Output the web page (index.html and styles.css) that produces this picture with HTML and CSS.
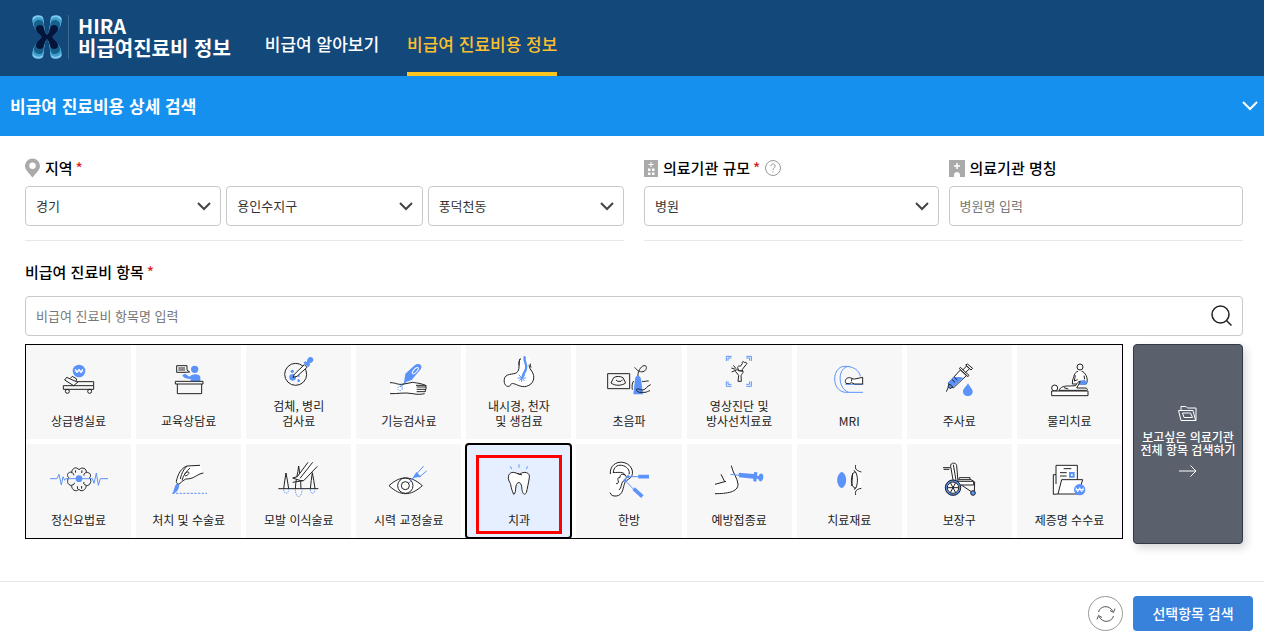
FILE: index.html
```
<!DOCTYPE html>
<html lang="ko">
<head>
<meta charset="utf-8">
<meta name="viewport" content="width=device-width, initial-scale=1">
<title>비급여 진료비용 정보</title>
<link rel="stylesheet" href="styles.css">
</head>
<body>
<header class="header">
  <a class="logo" href="#">
    <svg class="logo-mark" viewBox="98 43 90 132" aria-hidden="true">
      <defs>
        <g id="wing">
          <path fill="#7ccaf0" d="M99 56C99 42 127 40 131 50C135 62 133 88 141 100L143 109H128C122 98 99 84 99 56Z"/>
          <path fill="#3f9fcb" d="M101 64C101 48 127 46 131 57C135 68 133 90 141 101L143 109H128C122 98 101 88 101 64Z"/>
          <path fill="#15608c" d="M104 72C104 56 127 54 131 65C135 76 134 92 141 102L143 109H128C123 98 104 90 104 72Z"/>
          <path fill="#04143a" d="M110 84C109 71 128 69 132 79C135 86 136 96 143 103V109H127C124 101 111 96 110 84Z"/>
        </g>
      </defs>
      <use href="#wing"/>
      <use href="#wing" transform="translate(286 0) scale(-1 1)"/>
      <use href="#wing" transform="translate(0 218) scale(1 -1)"/>
      <use href="#wing" transform="translate(286 218) scale(-1 -1)"/>
    </svg>
    <span class="logo-text">HIRA<br>비급여진료비 정보</span>
  </a>
  <nav class="nav">
    <a href="#">비급여 알아보기</a>
    <a class="current" href="#" aria-current="page">비급여 진료비용 정보</a>
  </nav>
</header>

<main>
  <div class="titlebar">
    <h1>비급여 진료비용 상세 검색</h1>
    <button class="fold" type="button" aria-label="접기">
      <svg width="18" height="12" viewBox="0 0 18 12"><path d="M2 2l7 7 7-7" fill="none" stroke="#fff" stroke-width="2"/></svg>
    </button>
  </div>

  <form class="search">
    <div class="filters">
      <fieldset class="filter">
        <legend class="label">
          <svg width="15" height="20" viewBox="0 0 15 20"><path fill="#aaa" fill-rule="evenodd" d="M7.500 .5A7.500 7.500 0 0 0 0 8c0 4 4 7 7.500 11.500C11 15 15 12 15 8A7.500 7.500 0 0 0 7.500 .5zM7.500 4.500a3 3 0 1 1 0 6.500 3 3 0 0 1 0-6.500z"/></svg>
          지역 <em>*</em>
        </legend>
        <div class="controls tight">
          <span class="select"><select aria-label="시도"><option>경기</option></select><svg viewBox="0 0 14 9"><path d="M1 1l6 6 6-6"/></svg></span>
          <span class="select"><select aria-label="시군구"><option>용인수지구</option></select><svg viewBox="0 0 14 9"><path d="M1 1l6 6 6-6"/></svg></span>
          <span class="select"><select aria-label="읍면동"><option>풍덕천동</option></select><svg viewBox="0 0 14 9"><path d="M1 1l6 6 6-6"/></svg></span>
        </div>
      </fieldset>
      <div class="filter controls">
        <div class="field">
          <label class="label" for="size">
            <svg width="14" height="17" viewBox="0 0 14 17"><path fill="#aaa" d="M0 0h14v17H0z"/><path d="M7 2v5M4.500 4.500h5" stroke="#fff"/><path fill="#fff" d="M4 8.500h2.500v2.500H4zM8 8.500h2.500v2.500H8zM4 12.500h2.500v2.500H4zM8 12.500h2.500v2.500H8z"/></svg>
            의료기관 규모 <em>*</em>
            <svg width="16" height="16" viewBox="0 0 16 16" fill="none" stroke="#999"><circle cx="8" cy="8" r="7.500"/><path d="M5.800 6.200c0-3 4.400-3 4.400-.2 0 1.700-2.200 1.800-2.200 4M8 11.300v1.400"/></svg>
          </label>
          <span class="select"><select id="size"><option>병원</option></select><svg viewBox="0 0 14 9"><path d="M1 1l6 6 6-6"/></svg></span>
        </div>
        <div class="field">
          <label class="label" for="name">
            <svg width="16" height="17" viewBox="0 0 16 17"><path fill="#aaa" d="M0 0h16v17h-5v-2c0-4-6-4-6 0v2H0z"/><path d="M8 3v6M5 6h6" stroke="#fff" stroke-width="1.500"/></svg>
            의료기관 명칭
          </label>
          <input id="name" type="text" placeholder="병원명 입력">
        </div>
      </div>
    </div>

    <label class="label item-label" for="item">비급여 진료비 항목 <em>*</em></label>
    <div class="item-search">
      <input id="item" type="text" placeholder="비급여 진료비 항목명 입력">
      <button type="button" aria-label="검색"><svg width="22" height="22" viewBox="0 0 22 22" fill="none" stroke="#222" stroke-width="1.500"><circle cx="9.500" cy="9.500" r="8.500"/><path d="M15.500 15.500l5 5"/></svg></button>
    </div>

    <div class="picker">
      <div class="tiles">
        <button class="tile" type="button">
          <svg viewBox="84 54 180 132"><circle class="bf" cx="174" cy="93" r="19"/><path class="w" d="M163 87l5 12 6-12 6 12 5-12M161 93h26"/><path class="k" d="M127 137h91v11h-91zM218 137v-12h-52l-29-13-6 8 27 17M148 115l6-6 13 8-2 7M158 137l14-12"/><circle class="k" cx="139" cy="154" r="6"/><circle class="k" cx="206" cy="154" r="6"/></svg>
          <span>상급병실료</span></button>
        <button class="tile" type="button">
          <svg viewBox="414 54 180 132"><circle class="bf" cx="521" cy="88" r="11"/><path class="bf" d="M484 105l8-4 14 9c8-9 26-10 32 0v14h-29v-7c-10 0-22-2-25-12z"/><path class="k" d="M467 77h31v13l8 6-14 1h-25zM472 84h20M472 90h20M463 124h83v8h-83zM469 132v29h73v-29"/></svg>
          <span>교육상담료</span></button>
        <button class="tile two" type="button">
          <svg viewBox="86 33 180 132"><circle class="k" cx="166" cy="103" r="33"/><circle class="bf" cx="157" cy="112" r="10"/><circle class="bf" cx="156" cy="94" r="5"/><circle class="bf" cx="175" cy="108" r="3"/><circle class="bf" cx="175" cy="122" r="4"/><path class="k wf" d="M158 112l4-9 30-29 8 8-30 27z"/><path class="bf" d="M189 68l6-4 5 2c0-20 18-18 19-8 1 8-7 12-11 11l1 6-5 7z"/></svg>
          <span>검체, 병리<br>검사료</span></button>
        <button class="tile" type="button">
          <svg viewBox="417 54 180 132"><path class="wf" d="M452 128l34 6 32-7 42 13-6 23-36-4-66 3z"/><path class="bf" d="M492 128l4-27 28-25c12-10 26 0 18 12l-27 32-15 5-18 17-3-2z"/><ellipse cx="526" cy="92" rx="12" ry="5" class="w" transform="rotate(-48 526 92)"/><path class="k" d="M450 128c20 0 22 8 42 4l26-5c14 2 32 5 38 9M450 161c22 1 44-5 68 0 14 3 28 2 36 0M528 136h30v5h-28M530 148h28v-7M530 155h26v-7"/><circle class="b" cx="480" cy="145" r="7" stroke-dasharray="4 3"/></svg>
          <span>기능검사료</span></button>
        <button class="tile two" type="button">
          <svg viewBox="87 33 180 132"><path class="k wf" d="M181 56c-8 8 0 28-7 38-9 13-31 3-40 19-4 12 0 28 13 26 6-1 3-11 14-8 10 2 22 12 38 8 23-6 28-29 16-46-8-10-7-12-8-22"/><path class="wf" d="M183 52h26l2 22h-29z"/><path class="k" d="M181 56c-4 5-4 13-4 20M211 71c0 4 0 8 2 12"/><path class="b thick" d="M195 49c-7 13 8 22 3 38-4 11-9 13-10 25"/><path class="b" d="M176 104l18 19M195 104l-17 18M173 114h25M185 114v12"/></svg>
          <span>내시경, 천자<br>및 생검료</span></button>
        <button class="tile" type="button">
          <svg viewBox="417 54 180 132"><path class="k" d="M443 101h66v45h-66zM461 113c8-5 19-5 28 0l8 16c-13 9-32 9-44 0zM468 120l5 4h10l5-5"/><path class="bf" d="M520 163l5-45c1-14 16-14 18 0l6 45z"/><path class="k" d="M534 108c-2-10 8-30 18-31 12-2 8 16-3 18-11 2-19-5-25-13M546 124c8 2 12-2 20-1M572 134c-13 5-14 15-24 16-9 1-12-7-18-2-3 5 4 7 8 9h17c5 0 9-4 15-5M521 123c-6 7-5 17-4 26"/></svg>
          <span>초음파</span></button>
        <button class="tile two" type="button">
          <svg viewBox="87 33 180 132"><path class="b" d="M139 63V49h16M144 62v-8h10M199 49h15v14M199 54h10v8M139 124v15h16M144 124v9h10M214 124v15h-15M209 124v9h-10"/><path class="k wf" d="M174 124l2-18-9-11c-2-6 5-8 9-3l12 1c5 4-5 10-5 15l1 16zM176 92l-3-9c0-5 4-6 8-4l6-8c-3-6 5-9 6-3 7-3 10 3 5 6l-11 14 1 5z"/><path class="k" d="M154 84l12 4M160 76l8 10M155 96l12-5"/></svg>
          <span>영상진단 및<br>방사선치료료</span></button>
        <button class="tile" type="button">
          <svg viewBox="419 54 180 132"><path class="b" d="M551 157h-50c-46 0-46-78-4-78 28 0 43 14 46 30"/><path class="b" d="M510 79c-35 0-38 65-2 78M498 133h54"/><path class="k wf" d="M500 130c-5-8 0-17 10-17 7 0 8 5 16 4l24-5v20h-24l-9-4-7 3zM518 116l-2 8"/></svg>
          <span>MRI</span></button>
        <button class="tile" type="button">
          <svg viewBox="90 54 180 132"><path class="k wf" d="M184 90l18 17-38 36-14-1-2-13z"/><path class="bf" d="M163 111h20l10 2-30 28-13-1-2-13z"/><path class="k" d="M181 86l26 24 3-4-26-24zM191 90l12-12 9 8-13 12M200 75l16 15 5-5-16-13zM150 137l-8 18M166 112l9 8M159 119l9 8"/><path class="k bf" d="M147 140l5-8 9 9-8 5z"/><path class="bf" d="M207 130c5 10 14 17 14 25 0 17-29 17-29 0 0-9 10-15 15-25z"/></svg>
          <span>주사료</span></button>
        <button class="tile" type="button">
          <svg viewBox="420 54 180 132"><circle class="k" cx="543" cy="81" r="9"/><path class="k wf" d="M537 94c-12 3-12 17-16 26l-1 12h42c8-16-4-37-14-38M529 106l-3 17 10-4M555 107l2 11"/><path class="bf" d="M541 123l15-4 10 9-8 6h-24z"/><circle class="k wf" cx="467" cy="144" r="9"/><path class="k wf" d="M480 151c4-10 17-14 32-13l18-1c4-8 8-13 14-13l-11 20h28c7 4 4 7 0 7zM458 153h109v14H458zM495 143l13 4"/></svg>
          <span>물리치료</span></button>

        <button class="tile" type="button">
          <svg viewBox="84 351 180 132"><path class="k" d="M143 413c-8-8-1-19 9-16 1-13 14-18 22-8 10-10 23-3 22 8 11 0 16 8 10 16 7 10 3 23-10 24-2 14-15 20-22 11-10 9-22 2-22-11-13-2-15-14-9-24M151 398c5 0 8 3 7 8M163 391l1 7M183 391l-1 8M196 398c-6 0-8 5-7 9M152 435c7 0 8-3 8-7M196 436c-8-2-9-5-7-10M170 447l-1-8M182 446v-8"/><path class="b" d="M87 416h21l6-13 7 32 5-25 5 11 3-5h80l5 14 7-31 6 37 6-20h23"/><circle class="bf" cx="174" cy="416" r="10"/></svg>
          <span>정신요법료</span></button>
        <button class="tile" type="button">
          <svg viewBox="414 351 180 132"><path class="bf" d="M466 431l9 3c-1 15-9 25-21 27 5-9 5-20 12-30z"/><path class="b" d="M454 460h104" stroke-dasharray="7 4"/><path class="k wf" d="M537 376l-39 2c-18 7-27 23-32 46 1 11 10 10 16 1l12-8c26 1 33-15 53-18"/><path class="k" d="M498 378c-9 10-16 19-20 39M507 384c-10 10-20 21-24 37M492 408c8-2 14-7 11-11-4-4-10 4-14 6"/></svg>
          <span>처치 및 수술료</span></button>
        <button class="tile" type="button">
          <svg viewBox="86 351 180 132"><path class="k" d="M114 446h120M130 446c1-16 5-30 7-47 3 17 6 31 8 47M210 446c1-17 4-31 6-48 3 17 6 31 8 48M165 446c1-28 8-46 10-68 3 20 6 41 7 68"/><path class="b" d="M130 448c1 16 14 16 15 0M210 448c1 16 13 16 14 0M165 448c0 29 20 29 20 0" stroke-dasharray="4 3"/><path class="k wf" d="M203 367l-32 43-14 4 24 8 9 0 41-43"/><path class="k" d="M217 367l-38 48M157 427l31-5"/></svg>
          <span>모발 이식술료</span></button>
        <button class="tile" type="button">
          <svg viewBox="417 351 180 132"><path class="k wf" d="M447 437c34-31 65-31 100 0-35 32-66 32-100 0z"/><circle class="k" cx="496" cy="437" r="23"/><circle class="k" cx="496" cy="437" r="12"/><path class="b" d="M507 429l22-26M529 403l22-25M538 411l22-18"/><path class="bf" d="M529 396l14 14-20 3-9 8z"/></svg>
          <span>시력 교정술료</span></button>
        <button class="tile selected" type="button" aria-pressed="true">
          <svg viewBox="87 351 180 132"><path class="b" d="M151 379l4 8M177 373v10M203 379l-4 8"/><path class="k wf" d="M161 463c-11-24-6-29-14-40-7-19 5-29 18-25l14 5c13-11 32-6 29 10-3 17-6 33-9 45-8 12-13-2-14-18-2-16-14-16-17-2-2 14-1 22-7 25zM171 400l15 5"/></svg>
          <span>치과</span></button>
        <button class="tile" type="button">
          <svg viewBox="417 351 180 132"><path class="k wf" d="M451 402c-2-24 17-38 37-35 21 3 34 22 28 39-4 11-15 12-21 21-7 17-5 38-26 41-10 1-16-2-19-10"/><path class="k" d="M460 399c0-18 12-25 25-23 16 2 26 16 22 27M461 398c14-1 31-3 34 7-9-4-15-3-15 8-8-2-7 5-5 10 2 6-4 10-7 7M495 405c9 8 1 12-5 18-8 7-4 20-13 27"/><path class="b" d="M504 410h35M495 421l29 30"/><circle class="bf" cx="504" cy="410" r="5"/><circle class="bf" cx="495" cy="421" r="5"/><path class="b handle" d="M535 410h32M521 446l26 24"/></svg>
          <span>한방</span></button>
        <button class="tile" type="button">
          <svg viewBox="87 351 180 132"><path class="wf" d="M105 433l27-8 24-47c4 20 18 40 18 55 2 23-36 31-69 28z"/><path class="k" d="M105 433l33-9M123 403l11 22M154 377c4 22 19 38 20 55 1 25-35 29-69 29"/><path class="b" d="M151 403l26 3"/><path class="bf" d="M176 398l45 4 2-6 9 1-1 10 5 1c2-9 13-11 14 1 0 17-12 20-15 8l-5-1-1 9-9-1v-8l-43-4z"/></svg>
          <span>예방접종료</span></button>
        <button class="tile" type="button">
          <svg viewBox="419 351 180 132"><path class="bf" d="M487 395c18 8 18 42 0 50-18-10-18-40 0-50z"/><path class="wf" d="M527 391h19v56h-16z"/><path class="k" d="M529 375c-3 14 4 17 17 21M529 465c-3-13 4-18 17-20M527 395c-15 6-14 47 1 50M527 395c10 8 9 43 1 50M520 400l-3 38M524 391l6 7M524 449l7-7"/></svg>
          <span>치료재료</span></button>
        <button class="tile" type="button">
          <svg viewBox="90 351 180 132"><path class="k wf" d="M155 379c-2-12 17-13 18-2l4 48h-14zM181 413h32v6h-34zM174 424h50v11h-43z"/><path class="k" d="M132 383h22M134 388h17M163 374l8 47M213 417l14 9-1 33M187 435l33 22"/><circle cx="162" cy="443" r="21" class="b thick"/><circle class="k" cx="162" cy="443" r="23"/><circle class="k wf" cx="162" cy="443" r="17"/><path class="k" d="M145 443h34M154 428l16 30M170 428l-16 30"/><circle class="k bf" cx="222" cy="459" r="7"/></svg>
          <span>보장구</span></button>
        <button class="tile" type="button">
          <svg viewBox="420 351 180 132"><path class="k wf" d="M463 404h8v-28h64v43M463 404v59l14-1 11-43h63l-13 43h-61M471 404v28M483 398h20M494 386h23M483 408h20"/><path class="b seal" d="M513 399h11v11h-11z"/><circle class="bf" cx="542" cy="449" r="17"/><path class="w" d="M531 443l5 13 6-13 6 13 5-13M529 449h26"/></svg>
          <span>제증명 수수료</span></button>
      </div>
      <button class="all" type="button">
        <svg width="20" height="16" viewBox="0 0 20 16" fill="none" stroke="#fff"><path d="M3 5V1.500h5L9.500 3H18v12.500H3L.5 5.500H15l2.500 9.500M4.500 8h8l2 4.500H6z"/></svg>
        <span>보고싶은 의료기관<br>전체 항목 검색하기</span>
        <svg width="18" height="12" viewBox="0 0 18 12" fill="none" stroke="#fff"><path d="M0 6h17M11.500 .5L17 6l-5.500 5.500"/></svg>
      </button>
    </div>

    <div class="actions">
      <button class="reset" type="reset" aria-label="초기화">
        <svg width="20" height="18" viewBox="0 0 20 18" fill="none" stroke="#555"><path d="M2.500 7C4 1 13-1 17 6.500M17.500 11C16 17 7 19 3 11.500M14 5.500l3.500 2 1.500-4M6 12.500l-3.500-2-1.500 4"/></svg>
      </button>
      <button class="submit" type="submit">선택항목 검색</button>
    </div>
  </form>
</main>
</body>
</html>
```
FILE: styles.css
```
* { box-sizing: border-box; }

body {
  margin: 0;
  background: #fff;
  color: #222;
  font-family: "Noto Sans CJK KR", "Noto Sans", sans-serif;
  font-size: 13px;
}

button, input, select { font: inherit; color: inherit; }
button { padding: 0; border: 0; background: none; cursor: pointer; }
svg { display: block; flex: none; }
a { color: inherit; text-decoration: none; }

.header {
  display: flex;
  height: 76px;
  padding-left: 32px;
  background: #13487b;
  color: #fff;
}

.logo { display: flex; align-items: center; }
.logo-mark { width: 30px; height: 44px; margin-right: 6px; margin-bottom: 3px; }
.logo-text {
  padding-left: 9px;
  margin-bottom: 3px;
  border-left: 1px solid #41688f;
  font-size: 20px;
  font-weight: 700;
  line-height: 22px;
}

.nav {
  display: flex;
  gap: 28px;
  margin-left: 34px;
  font-size: 17px;
  font-weight: 500;
}
.nav a { padding-top: 31px; line-height: 26px; }
.nav .current { color: #fdbf2d; border-bottom: 4px solid #ffc31e; }

.titlebar {
  display: flex;
  align-items: center;
  justify-content: space-between;
  height: 60px;
  padding: 0 5px 0 10px;
  background: #1590ef;
  color: #fff;
}
.titlebar h1 { margin: 0 0 2px; font-size: 17px; font-weight: 700; }

.search { padding-top: 20px; }

.filters {
  display: flex;
  gap: 20px;
  margin: 0 21px 0 25px;
}
.filter {
  flex: 1;
  min-width: 0;
  margin: 0;
  padding: 0 0 14px;
  border: 0;
  border-bottom: 1px solid #e8e8e8;
}
.field { flex: 1; min-width: 0; }
.controls { display: flex; gap: 10px; }
.tight { gap: 5px; }

.label {
  display: flex;
  align-items: center;
  gap: 5px;
  height: 24px;
  margin-bottom: 6px;
  padding: 0 0 2px;
  color: #000;
  font-size: 15px;
  font-weight: 500;
}
.label svg { margin-top: 2px; }
.label em { margin-left: -2px; color: #e01f1f; font-style: normal; }

input, select {
  width: 100%;
  height: 40px;
  padding: 0 10px 2px;
  border: 1px solid #c8c9cc;
  border-radius: 4px;
  background: #fff;
  appearance: none;
}
select { color: #333; }
input::placeholder { color: #777; opacity: 1; }

.select { position: relative; display: block; flex: 1; min-width: 0; }
.select svg {
  position: absolute;
  top: 16px;
  right: 10px;
  width: 14px;
  height: 9px;
  fill: none;
  stroke: #444;
  stroke-width: 2;
  pointer-events: none;
}

.item-label { margin: 19px 25px 12px; }
.item-search { position: relative; margin: 0 21px 8px 25px; }
.item-search button { position: absolute; top: 9px; right: 10px; }

.picker {
  display: flex;
  align-items: flex-start;
  gap: 10px;
  margin: 0 21px 0 25px;
}
.tiles {
  display: grid;
  flex: 1;
  grid-template-columns: repeat(10, minmax(0, 1fr));
  gap: 5px;
  border: 1px solid #000;
}
.tile {
  display: flex;
  flex-direction: column;
  align-items: center;
  justify-content: flex-end;
  height: 94px;
  padding-bottom: 11px;
  background: #f7f7f7;
  font-size: 12px;
  line-height: 15px;
}
.tile svg { width: 60px; height: 44px; margin-bottom: 11px; overflow: visible; }
.tile.two svg { margin-bottom: 3px; }

.tile.selected {
  position: relative;
  height: auto;
  margin: -1px;
  padding-bottom: 10px;
  border: 2px solid #000;
  border-radius: 4px;
  background: #e5efff;
}
.tile.selected::after {
  content: "";
  position: absolute;
  inset: 10px 8px 3px 9px;
  border: 3px solid #f00;
}

.k { fill: none; stroke: #222; stroke-width: 3; stroke-linejoin: round; }
.b { fill: none; stroke: #5b93fa; stroke-width: 3; }
.w { fill: none; stroke: #fff; stroke-width: 3; }
.thick { stroke-width: 7; }
.handle { stroke-width: 11; }
.seal { stroke-width: 6; }
.wf { fill: #fff; }
.bf { fill: #5b93fa; }

.all {
  display: flex;
  flex-direction: column;
  align-items: center;
  justify-content: center;
  gap: 9px;
  width: 110px;
  min-height: 200px;
  padding-bottom: 6px;
  border: 1px solid #303a48;
  border-radius: 4px;
  background: #5a616c;
  box-shadow: 3px 4px 8px rgba(0, 0, 0, 0.16);
  color: #fff;
  font-size: 12px;
  font-weight: 500;
  line-height: 13px;
}

.actions {
  display: flex;
  justify-content: flex-end;
  gap: 10px;
  margin-top: 37px;
  padding: 14px 11px 12px;
  border-top: 1px solid #e8e8e8;
}
.reset {
  display: grid;
  place-items: center;
  width: 35px;
  height: 35px;
  border: 1px solid #999;
  border-radius: 50%;
}
.submit {
  width: 120px;
  height: 35px;
  padding-bottom: 2px;
  border-radius: 4px;
  background: #3882dc;
  color: #fff;
  font-size: 14px;
  font-weight: 500;
}
```
